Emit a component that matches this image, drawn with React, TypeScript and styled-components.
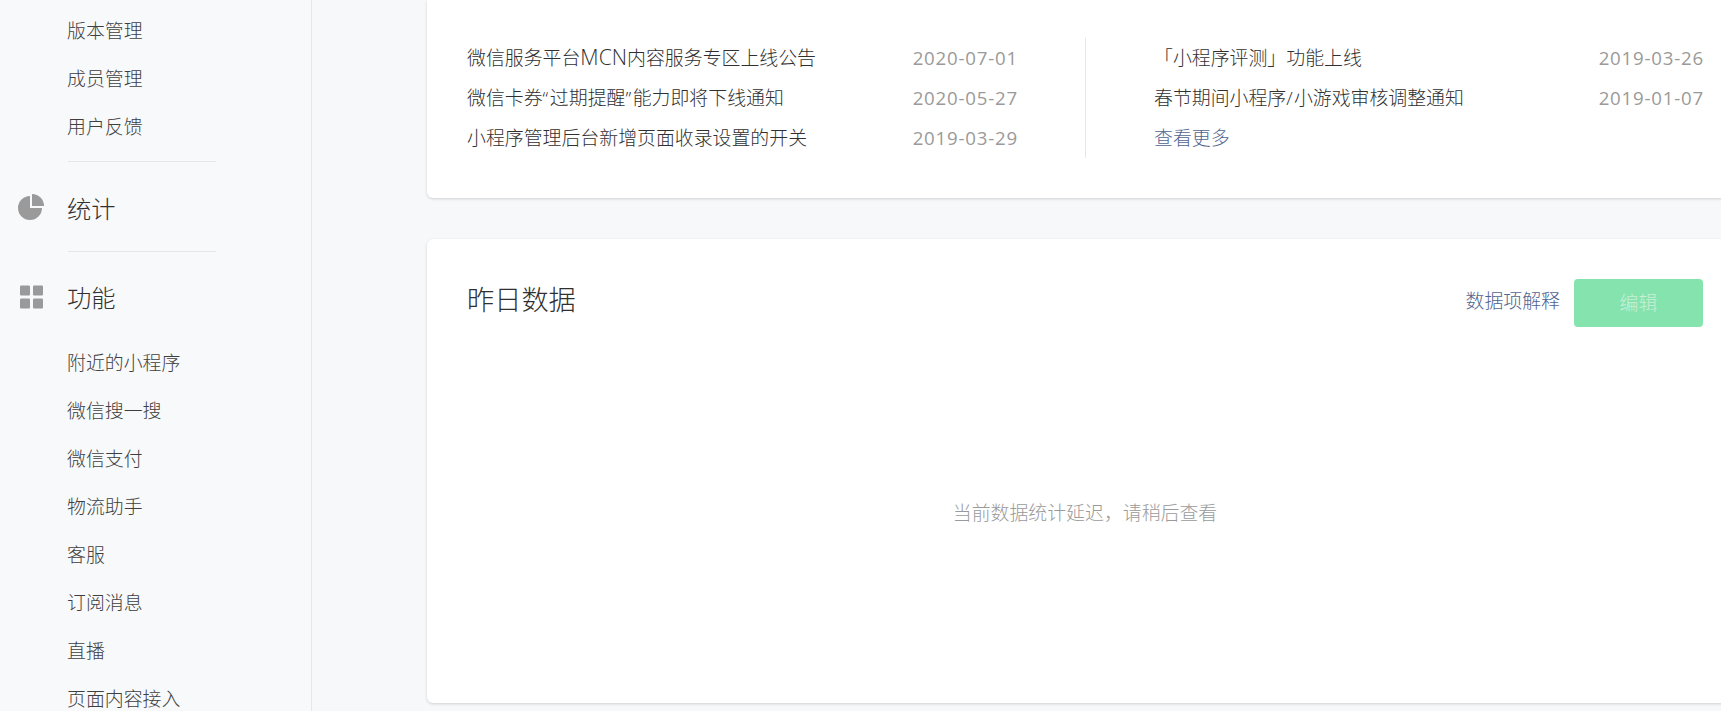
import React from "react";
import styled, { createGlobalStyle } from "styled-components";

const Global = createGlobalStyle`
  html, body { margin: 0; padding: 0; height: 100%; overflow: hidden; }
  body { font-family: "Open Sans", "Noto Sans CJK SC", sans-serif; }
  * { box-sizing: border-box; }
`;

const Page = styled.div`
  display: flex;
  width: 1721px;
  height: 711px;
  overflow: hidden;
  background: #f6f8f9;
  color: #303030;
  font-size: 18.9px;
  font-weight: 300;
`;

const Sidebar = styled.nav`
  flex: 0 0 312px;
  height: 711px;
  padding-top: 7px;
  overflow: hidden;
  background: #f8f9fb;
  border-right: 1px solid #e7e7eb;
`;

const NavItem = styled.div`
  height: 48px;
  line-height: 48px;
  padding-left: 67px;
  white-space: nowrap;
  color: #3f3f3f;
`;

const Rule = styled.div<{ $gap?: number }>`
  width: 148px;
  height: 1px;
  margin: ${(p) => p.$gap ?? 0}px 0 0 68px;
  background: #e7e7eb;
`;

const NavHead = styled.div<{ $height: number; $top: number }>`
  display: flex;
  align-items: center;
  height: ${(p) => p.$height}px;
  padding-top: ${(p) => p.$top}px;
  font-size: 24.3px;
  color: #303030;
`;

const IconSlot = styled.span`
  display: flex;
  align-items: center;
  justify-content: center;
  width: 26px;
  height: 26px;
  margin: 0 23px 0 18px;
  color: #9a9a9a;
`;

const Main = styled.main`
  flex: 0 0 auto;
  padding-left: 115px;
`;

const Card = styled.section`
  width: 1316px;
  background: #fff;
  border-radius: 0 0 6px 6px;
  box-shadow: 0 1px 3px rgba(0, 0, 0, 0.16);
`;

const NoticeCard = styled(Card)`
  height: 198px;
  padding: 38px 40px 0;
`;

const DataCard = styled(Card)`
  display: flex;
  flex-direction: column;
  height: 464px;
  margin-top: 41px;
  padding: 40px 40px 0;
  border-radius: 6px;
`;

const Columns = styled.div`
  display: grid;
  grid-template-columns: 618px 618px;
`;

const Column = styled.div<{ $divided?: boolean }>`
  padding: ${(p) => (p.$divided ? "0 0 0 68px" : "0 68px 0 0")};
  border-left: ${(p) => (p.$divided ? "1px solid #e7e7eb" : "0")};
`;

const Row = styled.div`
  display: flex;
  justify-content: space-between;
  height: 40px;
  line-height: 41px;
  white-space: nowrap;
`;

const Latin = styled.span<{ $track: number }>`
  letter-spacing: ${(p) => p.$track}px;
`;

const Acronym = styled.span`
  font-size: 21.2px;
  line-height: 1;
`;

const DateText = styled.span`
  margin-right: -1px;
  color: #9a9a9a;
  font-size: 18.67px;
  font-weight: 400;
  line-height: 39px;
  letter-spacing: 0.8px;
`;

const TextLink = styled.a`
  color: #4f6490;
`;

const HeadLink = styled(TextLink)`
  margin-bottom: 4px;
`;

const DataHead = styled.div`
  display: flex;
  align-items: center;
  height: 48px;
  line-height: 44px;
`;

const Title = styled.h2`
  flex: 1;
  margin: 0 0 7px;
  font-size: 27.2px;
  font-weight: 300;
  color: #303030;
`;

const EditButton = styled.button`
  width: 129px;
  height: 48px;
  margin-left: 14px;
  padding: 0;
  border: 0;
  border-radius: 4px;
  background: #85e3ae;
  color: #c7f0d9;
  font: inherit;
`;

const Empty = styled.div`
  margin-top: 171px;
  text-align: center;
  color: #9a9a9a;
`;

const PieIcon = () => (
  <svg width="26" height="26" viewBox="0 0 26 26" fill="currentColor">
    <path d="M12 2V14H24A12 12 0 1 1 12 2Z" />
    <path d="M14 0A12 12 0 0 1 26 12H14Z" />
  </svg>
);

const GridIcon = () => (
  <svg width="26" height="26" viewBox="0 0 26 26" fill="currentColor">
    <rect x="2" y="1.5" width="10" height="10" rx="1" />
    <rect x="15" y="1.5" width="10" height="10" rx="1" />
    <rect x="2" y="14.5" width="10" height="10" rx="1" />
    <rect x="15" y="14.5" width="10" height="10" rx="1" />
  </svg>
);

const topItems = ["版本管理", "成员管理", "用户反馈"];
const featureItems = ["附近的小程序", "微信搜一搜", "微信支付", "物流助手", "客服", "订阅消息", "直播", "页面内容接入"];

export default function App() {
  return (
    <Page>
      <Global />
      <Sidebar>
        {topItems.map((t) => (
          <NavItem key={t}>{t}</NavItem>
        ))}
        <Rule $gap={10} />
        <NavHead $height={89} $top={1}>
          <IconSlot><PieIcon /></IconSlot>
          统计
        </NavHead>
        <Rule />
        <NavHead $height={87} $top={2}>
          <IconSlot><GridIcon /></IconSlot>
          功能
        </NavHead>
        {featureItems.map((t) => (
          <NavItem key={t}>{t}</NavItem>
        ))}
      </Sidebar>
      <Main>
        <NoticeCard>
          <Columns>
            <Column>
              <Row><span>微信服务平台<Acronym>MCN</Acronym>内容服务专区上线公告</span><DateText>2020-07-01</DateText></Row>
              <Row><span>微信卡券<Latin $track={1.6}>“</Latin>过期提醒<Latin $track={1.6}>”</Latin>能力即将下线通知</span><DateText>2020-05-27</DateText></Row>
              <Row><span>小程序管理后台新增页面收录设置的开关</span><DateText>2019-03-29</DateText></Row>
            </Column>
            <Column $divided>
              <Row><span>「小程序评测」功能上线</span><DateText>2019-03-26</DateText></Row>
              <Row><span>春节期间小程序<Latin $track={1.2}>/</Latin>小游戏审核调整通知</span><DateText>2019-01-07</DateText></Row>
              <Row><TextLink>查看更多</TextLink></Row>
            </Column>
          </Columns>
        </NoticeCard>
        <DataCard>
          <DataHead>
            <Title>昨日数据</Title>
            <HeadLink>数据项解释</HeadLink>
            <EditButton>编辑</EditButton>
          </DataHead>
          <Empty>当前数据统计延迟，请稍后查看</Empty>
        </DataCard>
      </Main>
    </Page>
  );
}
